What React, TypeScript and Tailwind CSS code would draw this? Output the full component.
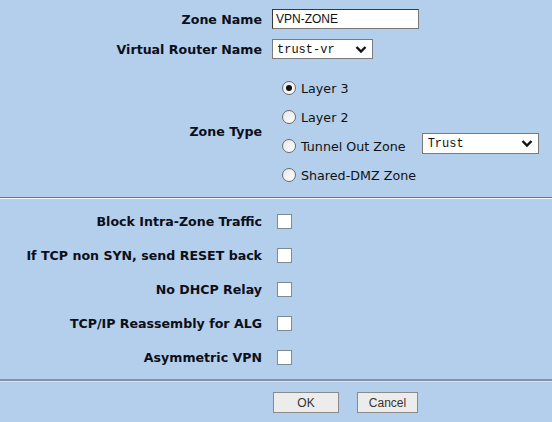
import React from "react";

function Chevron() {
  return (
    <svg width="12" height="9" viewBox="0 0 12 9" className="shrink-0">
      <polyline points="1.5,2 6,6.5 10.5,2" fill="none" stroke="#111" strokeWidth="2.4" strokeLinecap="butt" strokeLinejoin="miter" />
    </svg>
  );
}

function Radio({ checked }: { checked?: boolean }) {
  return (
    <span className="relative flex h-[14px] w-[14px] shrink-0 items-center justify-center rounded-full border border-[#6b6b6b] bg-gradient-to-br from-[#e6e6e6] to-white">
      {checked && <span className="h-[6px] w-[6px] rounded-full bg-[#111]" />}
    </span>
  );
}

function Label({ children }: { children: React.ReactNode }) {
  return (
    <div className="mt-[2px] text-right text-[12.6px] font-bold leading-none text-[#0c0e18]">{children}</div>
  );
}

const checks = [
  "Block Intra-Zone Traffic",
  "If TCP non SYN, send RESET back",
  "No DHCP Relay",
  "TCP/IP Reassembly for ALG",
  "Asymmetric VPN",
];

const radios = ["Layer 3", "Layer 2", "Tunnel Out Zone", "Shared-DMZ Zone"];

export default function App() {
  return (
    <div className="h-[422px] w-[552px] overflow-hidden bg-[#b3cfeb] font-['DejaVu_Sans',sans-serif]">
      <div className="flex flex-col pt-[9px] pb-[8px]">
        <div className="grid h-[20px] grid-cols-[262px_1fr] items-center gap-x-[10px]">
          <Label>Zone Name</Label>
          <div className="flex h-[20px] w-[147px] items-center border border-t-[#3a3a3a] border-l-[#3a3a3a] border-r-[#777] border-b-[#777] bg-white pl-[3px] font-['Liberation_Sans',sans-serif] text-[12px] leading-none text-[#111]">
            VPN-ZONE
          </div>
        </div>
        <div className="mt-[10px] grid h-[20px] grid-cols-[262px_1fr] items-center gap-x-[10px]">
          <Label>Virtual Router Name</Label>
          <div className="flex h-[20px] w-[101px] items-center justify-between border border-[#7a7a7a] bg-white pl-[4px] pr-[5px] font-['Liberation_Mono',monospace] text-[12px] leading-none text-[#111]">
            <span className="mt-[2px]">trust-vr</span>
            <Chevron />
          </div>
        </div>
        <div className="mt-[14px] grid grid-cols-[262px_1fr] items-center gap-x-[10px]">
          <Label>Zone Type</Label>
          <div className="flex flex-col pl-[10px]">
            {radios.map((r, i) => (
              <div key={r} className="flex h-[29px] items-center">
                <Radio checked={i === 0} />
                <span className="ml-[5px] mt-[3px] text-[12.7px] leading-none text-[#111]">{r}</span>
                {i === 2 && (
                  <div className="-mt-[5px] ml-[16px] flex h-[21px] w-[117px] items-center justify-between border border-[#7a7a7a] bg-white pl-[5px] pr-[5px] font-['Liberation_Mono',monospace] text-[12px] leading-none text-[#111]">
                    <span className="mt-[2px]">Trust</span>
                    <Chevron />
                  </div>
                )}
              </div>
            ))}
          </div>
        </div>
      </div>
      <div className="h-[1px] bg-[#66768a]" />
      <div className="h-[1px] bg-[#f2f6fb]" />
      <div className="flex flex-col pt-[5px]">
        {checks.map((c) => (
          <div key={c} className="grid h-[34px] grid-cols-[262px_1fr] items-center gap-x-[10px]">
            <Label>{c}</Label>
            <div className="pl-[5px]">
              <div className="h-[15px] w-[15px] border border-[#7d8b99] bg-white" />
            </div>
          </div>
        ))}
      </div>
      <div className="mt-[5px] h-[2px] bg-[#8593a3]" />
      <div className="h-[1px] bg-[#d3e2f2]" />
      <div className="mt-[10px] grid grid-cols-[262px_1fr] gap-x-[10px]">
        <div />
        <div className="flex gap-[18px] pl-[1px]">
          <div className="flex h-[21px] w-[66px] items-center justify-center border border-[#8a8a8a] bg-[#ececec] font-['Liberation_Sans',sans-serif] text-[12px] leading-none text-[#333]">
            OK
          </div>
          <div className="flex h-[21px] w-[61px] items-center justify-center border border-[#8a8a8a] bg-[#ececec] font-['Liberation_Sans',sans-serif] text-[12px] leading-none text-[#333]">
            Cancel
          </div>
        </div>
      </div>
    </div>
  );
}
